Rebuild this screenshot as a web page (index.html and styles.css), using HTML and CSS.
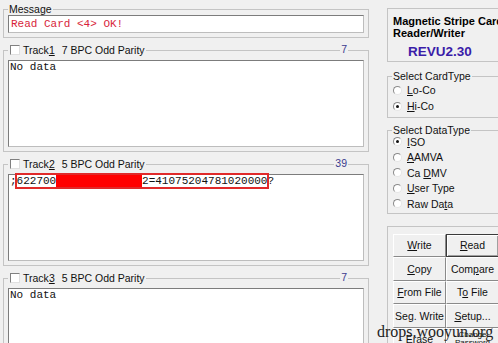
FILE: index.html
```html
<!DOCTYPE html>
<html lang="en">
<head>
    <meta charset="UTF-8">
    <title>Magnetic Stripe Card Reader/Writer</title>
    <link rel="stylesheet" href="styles.css">
</head>
<body>
    <div class="window">
        <!-- Left side: message and the three tracks -->
        <div class="left">
            <fieldset class="group msg-group">
                <legend>Message</legend>
                <div class="field msg">Read Card &lt;4&gt; OK!</div>
            </fieldset>

            <fieldset class="group track">
                <legend><span class="check"></span>Track<u>1</u><span class="fmt">7 BPC Odd Parity</span></legend>
                <span class="count">7</span>
                <div class="field area">No data</div>
            </fieldset>

            <fieldset class="group track">
                <legend><span class="check"></span>Track<u>2</u><span class="fmt">5 BPC Odd Parity</span></legend>
                <span class="count">39</span>
                <div class="field area">;<span class="marked">622700<span class="redact">0000000000000</span>2=41075204781020000</span>?</div>
            </fieldset>

            <fieldset class="group track">
                <legend><span class="check"></span>Track<u>3</u><span class="fmt">5 BPC Odd Parity</span></legend>
                <span class="count">7</span>
                <div class="field area">No data</div>
            </fieldset>
        </div>

        <!-- Right side: device info, options, buttons -->
        <div class="right">
            <div class="info">
                <div class="title">Magnetic Stripe Card<br>Reader/Writer</div>
                <div class="version">REVU2.30</div>
            </div>

            <fieldset class="group card-type">
                <legend>Select CardType</legend>
                <div class="radio"><span class="dot"></span><span><u>L</u>o-Co</span></div>
                <div class="radio on"><span class="dot"></span><span><u>H</u>i-Co</span></div>
            </fieldset>

            <fieldset class="group data-type">
                <legend>Select DataType</legend>
                <div class="radio-list">
                    <div class="radio on"><span class="dot"></span><span><u>I</u>SO</span></div>
                    <div class="radio"><span class="dot"></span><span><u>A</u>AMVA</span></div>
                    <div class="radio"><span class="dot"></span><span>Ca <u>D</u>MV</span></div>
                    <div class="radio"><span class="dot"></span><span><u>U</u>ser Type</span></div>
                    <div class="radio"><span class="dot"></span><span>Raw Da<u>t</u>a</span></div>
                </div>
            </fieldset>

            <div class="buttons">
                <div class="btn-grid">
                    <button class="btn"><u>W</u>rite</button>
                    <button class="btn btn-default"><u>R</u>ead</button>
                    <button class="btn"><u>C</u>opy</button>
                    <button class="btn">Com<u>p</u>are</button>
                    <button class="btn"><u>F</u>rom File</button>
                    <button class="btn">T<u>o</u> File</button>
                    <button class="btn">Seg. Write</button>
                    <button class="btn"><u>S</u>etup...</button>
                    <button class="btn"><u>E</u>rase</button>
                    <button class="btn btn-small">Change<br>Password</button>
                </div>
            </div>
        </div>
    </div>

    <div class="watermark">drops.wooyun.org</div>
</body>
</html>
```

FILE: styles.css
```css
/* Window */
body {
    margin: 0;
    width: 498px;
    height: 343px;
    overflow: hidden;
    position: relative;
    background: #f0f0f0;
    font-family: "Liberation Sans", Arial, sans-serif;
    font-size: 10.5px;
    color: #111;
}

.window {
    display: flex;
    gap: 18px;
    padding-left: 3px;
}

/* Group boxes */
.group {
    margin: 0;
    padding: 0 4px 4px;
    border: 1px solid #c4c4c4;
    min-width: 0;
    position: relative;
}

.group legend {
    padding: 0 1px;
    line-height: 12px;
}

/* Left column */
.left {
    width: 366px;
    flex: none;
    display: flex;
    flex-direction: column;
    gap: 6px;
    padding-top: 3px;
}

.field {
    box-sizing: border-box;
    background: #fff;
    border: 1px solid;
    border-color: #7c7c7c #bdbdbd #bdbdbd #7c7c7c;
    font-family: "Liberation Mono", "Courier New", monospace;
    font-size: 11px;
    white-space: pre;
}

.msg {
    height: 18px;
    line-height: 16px;
    padding-left: 2px;
    color: #d81e3a;
}

.area {
    height: 87px;
    margin-top: 4px;
    padding: 0 1px;
    line-height: 13px;
    color: #111;
}

.check {
    display: inline-block;
    width: 8px;
    height: 8px;
    margin: 0 3px 0 1px;
    vertical-align: -1px;
    background: #fff;
    border: 1px solid;
    border-color: #808080 #e0e0e0 #e0e0e0 #808080;
}

.fmt {
    margin-left: 7px;
}

.count {
    position: absolute;
    top: -13px;
    right: 20px;
    padding: 0 1px;
    line-height: 12px;
    background: #f0f0f0;
    color: #3b3b8f;
}

/* Track 2 highlight */
.marked {
    outline: 2px solid #e02a2a;
}

.redact {
    background: #ff0000;
    color: #ff0000;
}

/* Right column */
.right {
    width: 130px;
    flex: none;
    display: flex;
    flex-direction: column;
    padding-top: 8px;
}

.info {
    height: 54px;
    box-sizing: border-box;
    border: 1px solid #c4c4c4;
    padding: 6px 0 0 5px;
}

.title {
    font-weight: bold;
    font-size: 11px;
    line-height: 12px;
    white-space: nowrap;
    color: #000;
}

.version {
    margin: 5px 0 0 15px;
    font-weight: bold;
    font-size: 13.5px;
    color: #3a1ca8;
}

.card-type {
    margin-top: 8px;
    padding-bottom: 3px;
}

.data-type {
    margin-top: 6px;
    padding-bottom: 1px;
}

.radio {
    height: 16px;
    display: flex;
    align-items: center;
    white-space: nowrap;
}

.radio-list {
    margin-top: -2px;
}

.radio-list .radio {
    height: 15.5px;
}

.dot {
    width: 7px;
    height: 7px;
    margin: 0 5px 0 1px;
    border-radius: 50%;
    background: #fff;
    border: 1px solid;
    border-color: #8a8a8a #e6e6e6 #e6e6e6 #8a8a8a;
    position: relative;
}

.radio.on .dot::after {
    content: "";
    position: absolute;
    left: 2px;
    top: 2px;
    width: 3px;
    height: 3px;
    border-radius: 50%;
    background: #111;
}

/* Buttons */
.buttons {
    margin-top: 12px;
    height: 118px;
    border: 1px solid #c4c4c4;
    padding: 7px 0 0 5px;
}

.btn-grid {
    display: grid;
    grid-template-columns: 53px 53px;
    grid-auto-rows: 23.5px;
}

.btn {
    margin: 0;
    padding: 0;
    background: #f0f0f0;
    border: 1px solid;
    border-color: #fff #8a8a8a #8a8a8a #fff;
    font-family: "Liberation Sans", Arial, sans-serif;
    font-size: 10.5px;
    color: #111;
    line-height: 12px;
}

.btn-default {
    border-color: #3a3a3a;
    box-shadow: inset 1px 1px 0 #fff, inset -1px -1px 0 #a0a0a0;
}

.btn-small {
    font-size: 8px;
    line-height: 8px;
}

/* Watermark over the corner */
.watermark {
    position: absolute;
    left: 377px;
    top: 323px;
    font-family: "Liberation Serif", "Times New Roman", serif;
    font-size: 16px;
    color: #1e1e1e;
}
```
